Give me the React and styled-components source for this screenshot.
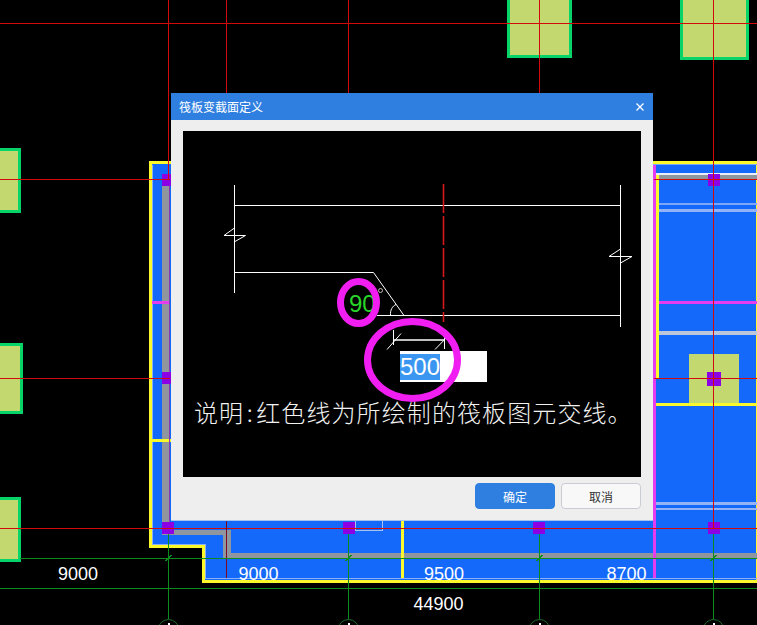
import React from "react";
import styled, { createGlobalStyle } from "styled-components";

const GlobalStyle = createGlobalStyle`
  html, body {
    margin: 0;
    padding: 0;
    background: #000;
  }
`;

const CJK = `"Noto Sans CJK SC", "Liberation Sans", sans-serif`;

const Stage = styled.div`
  position: relative;
  width: 757px;
  height: 625px;
  overflow: hidden;
  background: #000;
`;

const Plan = styled.svg`
  display: block;
  shape-rendering: crispEdges;
`;

const Dim = styled.text`
  font-family: "Liberation Sans", sans-serif;
  font-size: 18px;
  fill: #fff;
  text-anchor: middle;
  shape-rendering: auto;
`;

const Dialog = styled.div`
  position: absolute;
  left: 171px;
  top: 93px;
  width: 482px;
  display: flex;
  flex-direction: column;
  background: #eeeeee;
  box-shadow: 0 1px 0 #a6c2ee;
  font-family: ${CJK};
`;

const TitleBar = styled.div`
  height: 27px;
  padding: 0 9px 0 8px;
  display: flex;
  align-items: center;
  justify-content: space-between;
  background: #2f7fe0;
  color: #fff;
  font-size: 12px;
`;

const CloseIcon = styled.svg`
  display: block;
`;

const Body = styled.div`
  padding: 11px 12px;
  display: flex;
  flex-direction: column;
  gap: 6px;
`;

const Preview = styled.div`
  position: relative;
  height: 346px;
  background: #000;
`;

const Sketch = styled.svg`
  display: block;
`;

const AngleText = styled.text`
  font-family: "Liberation Sans", sans-serif;
  font-size: 24px;
  fill: #2ad42a;
`;

const ValueBox = styled.div`
  position: absolute;
  left: 217px;
  top: 220px;
  width: 87px;
  height: 31px;
  display: flex;
  align-items: center;
  background: #fff;
  font-family: "Liberation Sans", sans-serif;
  font-size: 24px;
`;

const Selected = styled.span`
  height: 26px;
  line-height: 26px;
  background: #3a96f0;
  color: #fff;
`;

const Caption = styled.div`
  margin-top: 5px;
  padding-left: 11px;
  font-size: 24px;
  font-weight: 300;
  line-height: 32px;
  letter-spacing: 1.1px;
  color: #f2f2f2;
  white-space: nowrap;
`;

const Colon = styled.span`
  display: inline-block;
  width: 12px;
  text-align: center;
`;

const Annotation = styled.svg`
  position: absolute;
  inset: 0;
  pointer-events: none;
`;

const Footer = styled.div`
  display: flex;
  justify-content: flex-end;
  gap: 6px;
`;

const Button = styled.button`
  width: 80px;
  height: 26px;
  padding: 0;
  border-radius: 4px;
  border: 1px solid ${(props) => (props.$primary ? "#2f7fe0" : "#c9ccd4")};
  background: ${(props) => (props.$primary ? "#2f7fe0" : "#f8f8f8")};
  color: ${(props) => (props.$primary ? "#fff" : "#333")};
  font-family: ${CJK};
  font-size: 12px;
`;

const RED = "#d20a0a";
const GREEN = "#0c8a1c";
const YELLOW = "#fbf82c";
const MAGENTA = "#e63cf0";
const LIGHT = "#7ea6f8";
const GREY = "#90969e";

// x, y, width, height, fill
const bands = [
  [162, 180, 7, 355, GREY],
  [162, 530, 64, 5, GREY],
  [223, 530, 8, 28, GREY],
  [223, 553, 534, 5, GREY],
  [656, 175, 101, 4, GREY],
  [656, 173, 101, 2, "#e8eefc"],
  [652, 164, 105, 1, LIGHT],
  [652, 203, 105, 2, LIGHT],
  [652, 209, 105, 3, "#94b2f6"],
  [652, 502, 105, 3, "#94b2f6"],
  [652, 508, 105, 2, "#94b2f6"],
  [658, 331, 99, 4, "#bcc6da"],
  [689, 354, 50, 49, "#c3d96f"],
  [152, 301, 18, 3, MAGENTA],
  [655, 301, 102, 3, MAGENTA],
  [152, 439, 19, 3, YELLOW],
  [655, 403, 102, 3, YELLOW],
  [401, 520, 3, 58, YELLOW],
  [656, 175, 3, 203, YELLOW],
  [653, 165, 3, 413, MAGENTA],
  [169, 178, 1, 350, "#8a3ab0"],
];

const columns = [
  [507, -4, 65, 62],
  [680, -4, 69, 64],
  [-4, 148, 25, 65],
  [-4, 343, 27, 71],
  [-4, 497, 25, 65],
];

const hubs = [
  [162, 174, 12, 12],
  [162, 372, 12, 12],
  [162, 522, 12, 12],
  [343, 522, 12, 12],
  [533, 522, 12, 12],
  [708, 522, 12, 12],
  [708, 174, 12, 12],
  [707, 372, 14, 14],
];

// x1, y1, x2, y2, stroke
const gridLines = [
  [0, 23.5, 757, 23.5, RED],
  [0, 179.5, 170, 179.5, RED],
  [654, 179.5, 757, 179.5, RED],
  [0, 378.5, 170, 378.5, RED],
  [654, 378.5, 757, 378.5, RED],
  [0, 528.5, 757, 528.5, RED],
  [168.5, 0, 168.5, 180, RED],
  [226.5, 0, 226.5, 93, RED],
  [348.5, 0, 348.5, 93, RED],
  [539.5, 0, 539.5, 93, RED],
  [713.5, 0, 713.5, 528, RED],
  [226.5, 521, 226.5, 578, "#7c0a24"],
  [20, 558.5, 757, 558.5, GREEN],
  [0, 588.5, 757, 588.5, GREEN],
  [168.5, 534, 168.5, 620, GREEN],
  [348.5, 534, 348.5, 620, GREEN],
  [539.5, 534, 539.5, 620, GREEN],
  [713.5, 534, 713.5, 620, GREEN],
];

const dims = [
  [78, 580, "9000"],
  [258.5, 580, "9000"],
  [444, 580, "9500"],
  [626.5, 580, "8700"],
  [438.5, 610, "44900"],
];

const axes = [168.5, 348.5, 539.5, 713.5];

const sketchPaths = [
  "M234.5 185V293",
  "M234 205.5H620.5",
  "M620.5 185V327",
  "M234 272.5H373.5L404 315.5",
  "M377 315.5H620.5",
  "M224 235.5H245.5L235 241.5M224 235.5L234.5 228",
  "M609 256.5H632L620.5 263M609 256.5L620.5 249",
  "M390.5 315.5C390 310 392.5 306 396 304.5",
  "M393.5 330V345M387 349.5L401 333.5",
  "M444.5 335V349M435 349.5L449 335",
];

const Background = () => (
  <Plan width="757" height="625" viewBox="0 0 757 625">
    <polygon
      points="150,162 757,162 757,581 203,581 203,546.5 150,546.5"
      fill="#1469fb"
      stroke={YELLOW}
      strokeWidth="3"
    />
    <polyline
      points="152.5,165 152.5,544.5 205.5,544.5 205.5,578.5 757,578.5"
      fill="none"
      stroke="#8cb0f4"
      strokeWidth="1.5"
    />
    {bands.map(([x, y, w, h, fill], i) => (
      <rect key={i} x={x} y={y} width={w} height={h} fill={fill} />
    ))}
    <path d="M355.5 520V530.5H382.5V520" fill="none" stroke="#a8c2f0" strokeWidth="1.5" />
    {columns.map(([x, y, w, h], i) => (
      <rect
        key={i}
        x={x + 1.5}
        y={y + 1.5}
        width={w - 3}
        height={h - 3}
        fill="#c3d96f"
        stroke="#06d468"
        strokeWidth="3"
      />
    ))}
    {hubs.map(([x, y, w, h], i) => (
      <rect key={i} x={x} y={y} width={w} height={h} fill="#8c00e6" />
    ))}
    {gridLines.map(([x1, y1, x2, y2, stroke], i) => (
      <line key={i} x1={x1} y1={y1} x2={x2} y2={y2} stroke={stroke} />
    ))}
    {axes.map((x) => (
      <g key={x}>
        <path d={`M${x - 3} 561L${x + 3} 555`} stroke={GREEN} />
        <circle cx={x} cy="630" r="10.5" fill="#000" stroke="#1a6a28" style={{ shapeRendering: "auto" }} />
        <rect x={x - 1} y="623" width="2" height="2" fill="#fff" />
      </g>
    ))}
    {dims.map(([x, y, label]) => (
      <Dim key={label + x} x={x} y={y}>
        {label}
      </Dim>
    ))}
  </Plan>
);

const App = () => {
  return (
    <Stage>
      <GlobalStyle />
      <Background />
      <Dialog>
        <TitleBar>
          <span>筏板变截面定义</span>
          <CloseIcon width="8" height="8" viewBox="0 0 8 8">
            <path d="M0.5 0.5L7.5 7.5M7.5 0.5L0.5 7.5" stroke="#fff" strokeWidth="1.3" />
          </CloseIcon>
        </TitleBar>
        <Body>
          <Preview>
            <Sketch width="458" height="260" viewBox="183 131 458 260">
              <g fill="none" stroke="#fff" strokeWidth="1">
                {sketchPaths.map((d) => (
                  <path key={d} d={d} />
                ))}
                <path d="M393 340H444" strokeWidth="1.6" />
                <circle cx="380.5" cy="290.5" r="2" stroke="#c8c0b8" />
                <path d="M443.5 184V322" stroke="#d4181c" strokeWidth="1.6" strokeDasharray="29 3" />
              </g>
              <AngleText x="349" y="312">90</AngleText>
            </Sketch>
            <ValueBox>
              <Selected>500</Selected>
            </ValueBox>
            <Caption>
              说明<Colon>:</Colon>红色线为所绘制的筏板图元交线。
            </Caption>
            <Annotation width="458" height="346" viewBox="183 131 458 346">
              <ellipse cx="358.5" cy="302.5" rx="18" ry="21" fill="none" stroke="#f01ef0" strokeWidth="7" />
              <ellipse cx="412.5" cy="360" rx="45" ry="38.5" fill="none" stroke="#f01ef0" strokeWidth="7" />
            </Annotation>
          </Preview>
          <Footer>
            <Button $primary>确定</Button>
            <Button>取消</Button>
          </Footer>
        </Body>
      </Dialog>
    </Stage>
  );
};

export default App;
